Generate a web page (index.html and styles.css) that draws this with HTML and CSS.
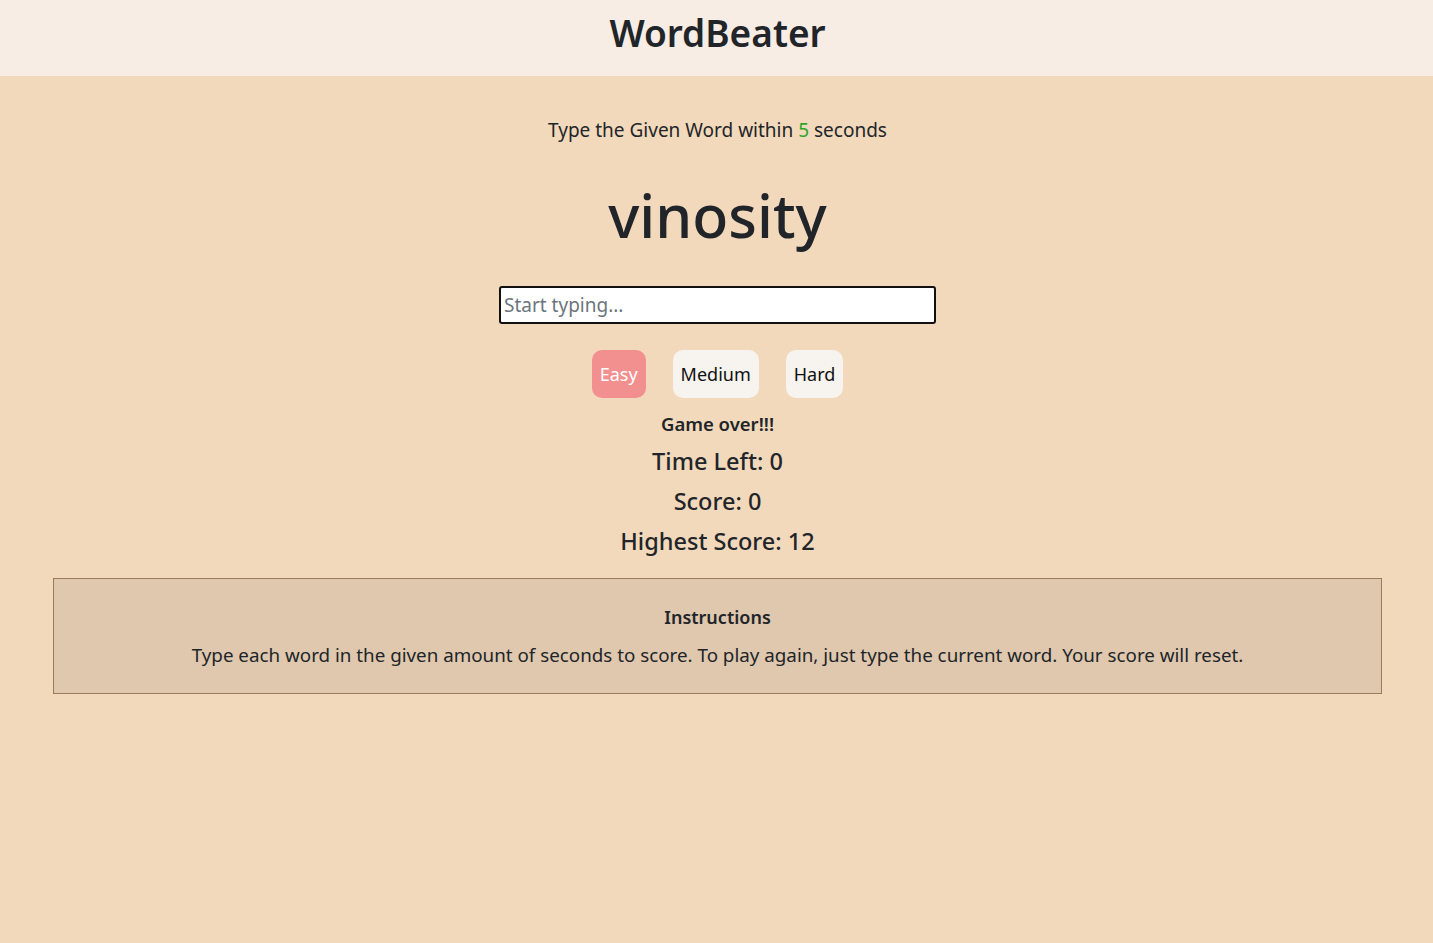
FILE: index.html
```html
<!DOCTYPE html>
<html lang="en">
<head>
<meta charset="utf-8">
<title>WordBeater</title>
<link rel="stylesheet" href="styles.css">
</head>
<body>
<header class="topbar">
  <h1 class="brand">WordBeater</h1>
</header>
<main class="game">
  <p class="lead">Type the Given Word within <span class="secs">5</span> seconds</p>
  <h2 class="word">vinosity</h2>
  <input class="entry" type="text" placeholder="Start typing..." autofocus>
  <div class="levels">
    <button class="lvl lvl-active">Easy</button>
    <button class="lvl">Medium</button>
    <button class="lvl">Hard</button>
  </div>
  <h5 class="message">Game over!!!</h5>
  <h3 class="stat">Time Left: 0</h3>
  <h3 class="stat">Score: 0</h3>
  <h3 class="stat">Highest Score: 12</h3>
  <section class="instructions">
    <h5 class="ins-title">Instructions</h5>
    <p class="ins-text">Type each word in the given amount of seconds to score. To play again, just type the current word. Your score will reset.</p>
  </section>
</main>
</body>
</html>
```
FILE: styles.css
```css
* { box-sizing: border-box; }
html, body { margin: 0; height: 100%; }
body {
  font-family: "Noto Sans", "Open Sans", sans-serif;
  color: #212529;
  background: #f3d9bb;
}
.topbar {
  background: #f7ede4;
  height: 76px;
  display: flex;
  align-items: center;
  justify-content: center;
  padding-left: 2px;
}
.brand {
  margin: 0 0 10px;
  font-size: 37px;
  font-weight: 600;
  line-height: 1.2;
}
.game {
  display: flex;
  flex-direction: column;
  align-items: center;
  padding: 0 51px 0 53px;
}
.lead {
  margin: 40px 0 0;
  font-size: 19px;
  line-height: 28px;
}
.secs { color: #2ea52a; }
.word {
  margin: 27px 0 0;
  font-size: 59px;
  font-weight: 500;
  line-height: 88px;
}
.entry {
  margin-top: 27px;
  width: 437px;
  height: 38px;
  border: 2px solid #111;
  border-radius: 3px;
  background: #fff;
  padding: 0 3px;
  font-family: inherit;
  font-size: 19px;
  color: #495057;
  outline: none;
}
.entry::placeholder { color: #6c757d; }
.levels {
  display: flex;
  gap: 27px;
  margin-top: 26px;
}
.lvl {
  height: 48px;
  padding: 0 8px;
  border: none;
  border-radius: 10px;
  background: #f7f3ee;
  color: #111;
  font-family: inherit;
  font-size: 18px;
}
.lvl-active { background: #f28f8f; color: #fff; }
.message {
  margin: 14px 0 0;
  font-size: 18.5px;
  font-weight: 600;
  line-height: 24px;
}
.stat {
  margin: 10px 0 0;
  font-size: 23.5px;
  font-weight: 500;
  line-height: 30px;
}
.instructions {
  margin-top: 22px;
  align-self: stretch;
  background: #dfc8ae;
  border: 1px solid #9a7d5e;
  padding: 26px 16px 25px;
  text-align: center;
}
.ins-title {
  margin: 0;
  font-size: 18px;
  font-weight: 600;
  line-height: 24px;
}
.ins-text {
  margin: 13px 0 0;
  font-size: 18.8px;
  line-height: 26px;
}
```
